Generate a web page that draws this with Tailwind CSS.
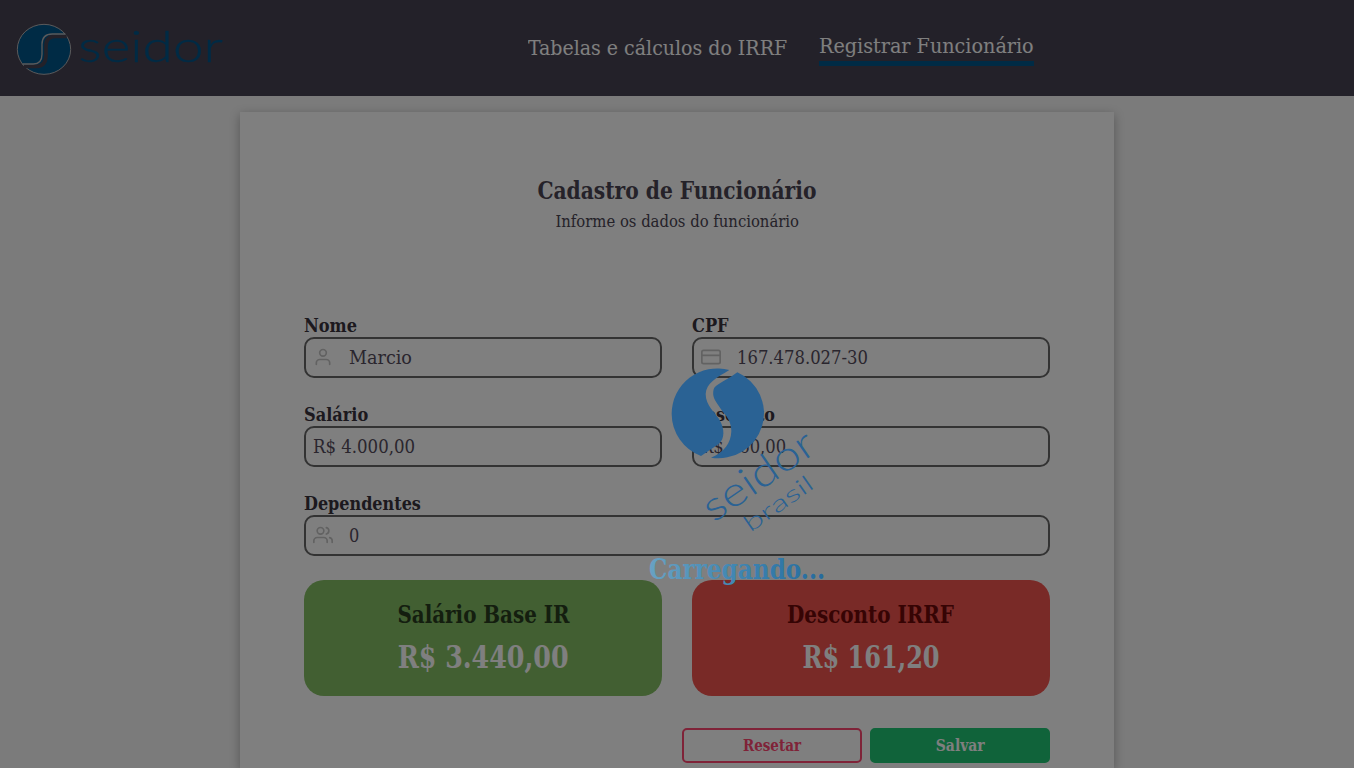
<!DOCTYPE html>
<html lang="pt-BR">
<head>
<meta charset="utf-8">
<title>Registrar Funcionário</title>
<script src="https://cdn.jsdelivr.net/npm/@tailwindcss/browser@4"></script>
</head>
<body class="relative h-[768px] overflow-hidden bg-[#f6f6f6] font-['Roboto_Slab','DejaVu_Serif_Condensed','DejaVu_Serif',serif] font-stretch-condensed text-[#4a4453]">
<header class="flex h-24 items-center bg-[#474353] pl-4">
  <svg class="mt-0.5 h-[56px] w-[224px] shrink-0 overflow-visible" viewBox="48 63 672 168">
    <ellipse cx="132" cy="148" rx="80" ry="75" fill="#00568a" stroke="#b6b4b6" stroke-width="3"/>
    <path d="M200 109H166Q138 109 138 137V165Q138 199 110 199H72" fill="none" stroke="#474353" stroke-width="11"/>
    <path d="M196 102H157Q126 102 126 133V163Q126 192 100 192H67" fill="none" stroke="#b6b4b6" stroke-width="4"/>
    <text x="235" y="185" font-family="Lato" font-weight="300" font-size="132" textLength="434" lengthAdjust="spacingAndGlyphs" fill="#00568a" stroke="#00568a" stroke-width="1">seidor</text>
  </svg>
  <nav class="ml-[288px] flex items-center gap-8 text-[20px] leading-[27px] whitespace-nowrap text-white">
    <a class="w-[260px]"><span class="inline-block origin-left scale-x-[1.055]">Tabelas e cálculos do IRRF</span></a>
    <a class="mt-0.5 -ml-px w-[215px] border-b-5 border-[#00568a] pb-[2px]"><span class="inline-block origin-left translate-y-px scale-x-[1.066]">Registrar Funcionário</span></a>
  </nav>
</header>
<main class="mx-auto mt-4 h-[656px] w-[874px] bg-white px-16 pt-16 shadow-[0_3px_10px_rgba(0,0,0,0.3)]">
  <div class="text-center">
    <h1 class="text-[24px] leading-[30px] font-bold"><span class="inline-block scale-x-[0.937]">Cadastro de Funcionário</span></h1>
    <p class="text-base leading-[30px]"><span class="inline-block translate-y-px scale-x-[1.03]">Informe os dados do funcionário</span></p>
  </div>
  <form class="mt-[78px] grid grid-cols-2 gap-x-[30px] gap-y-[25px] text-lg leading-[24px] text-[#544c5c]">
    <label class="block"><span class="block h-[23px] font-bold text-[#38323c]">Nome</span>
      <span class="flex h-[41px] items-center rounded-[10px] border-2 border-[#666] pl-[7px]"><svg class="-mt-0.5 h-5 w-5 text-[#c4c4c4]" viewBox="0 0 24 24" fill="none" stroke="currentColor" stroke-width="2" stroke-linecap="round" stroke-linejoin="round"><path d="M20 21v-2a4 4 0 0 0-4-4H8a4 4 0 0 0-4 4v2"/><circle cx="12" cy="7" r="4"/></svg><span class="ml-4 inline-block origin-left scale-x-[1.086]">Marcio</span></span></label>
    <label class="block"><span class="block h-[23px] font-bold text-[#38323c]">CPF</span>
      <span class="flex h-[41px] items-center rounded-[10px] border-2 border-[#666] pl-[7px]"><svg class="-mt-0.5 h-5 w-5 text-[#c4c4c4]" viewBox="0 0 24 24" fill="none" stroke="currentColor" stroke-width="2" stroke-linecap="round" stroke-linejoin="round"><rect x="1" y="4" width="22" height="16" rx="2"/><path d="M1 10h22"/></svg><span class="ml-4 inline-block origin-left scale-x-[1.015]">167.478.027-30</span></span></label>
    <label class="block"><span class="block h-[23px] font-bold text-[#38323c]">Salário</span>
      <span class="flex h-[41px] items-center rounded-[10px] border-2 border-[#666] pl-[7px]"><span class="inline-block origin-left scale-x-[1.023]">R$ 4.000,00</span></span></label>
    <label class="block"><span class="block h-[23px] font-bold text-[#38323c]"><span class="inline-block origin-left scale-x-[0.985]">Desconto</span></span>
      <span class="flex h-[41px] items-center rounded-[10px] border-2 border-[#666] pl-[7px]"><span class="inline-block origin-left scale-x-[1.01]">R$ 560,00</span></span></label>
    <label class="col-span-2 block"><span class="block h-[23px] font-bold text-[#38323c]"><span class="inline-block origin-left scale-x-[0.99]">Dependentes</span></span>
      <span class="flex h-[41px] items-center rounded-[10px] border-2 border-[#666] pl-[7px]"><svg class="-mt-0.5 h-5 w-5 text-[#c4c4c4]" viewBox="0 0 24 24" fill="none" stroke="currentColor" stroke-width="2" stroke-linecap="round" stroke-linejoin="round"><path d="M17 21v-2a4 4 0 0 0-4-4H5a4 4 0 0 0-4 4v2"/><circle cx="9" cy="7" r="4"/><path d="M23 21v-2a4 4 0 0 0-3-3.87M16 3.13a4 4 0 0 1 0 7.75"/></svg><span class="ml-4">0</span></span></label>
  </form>
  <section class="mt-6 grid grid-cols-2 gap-[30px] text-center font-bold">
    <div class="h-[116px] rounded-[20px] bg-[#84be64] pt-[17px]">
      <h2 class="text-[24px] leading-[36px] text-[#283c1e]"><span class="inline-block scale-x-[0.92]">Salário Base IR</span></h2>
      <p class="text-[32px] leading-[48px] text-white"><span class="inline-block scale-x-[0.88]">R$ 3.440,00</span></p>
    </div>
    <div class="h-[116px] rounded-[20px] bg-[#f2544e] pt-[17px]">
      <h2 class="text-[24px] leading-[36px] text-[#6c0808]"><span class="inline-block scale-x-[0.922]">Desconto IRRF</span></h2>
      <p class="text-[32px] leading-[48px] text-white"><span class="inline-block scale-x-[0.835]">R$ 161,20</span></p>
    </div>
  </section>
  <div class="mt-8 flex justify-end gap-2 text-base leading-[31px] font-bold">
    <button class="h-[35px] w-[180px] rounded-[5px] border-2 border-[#ff4670] text-[#ff4670]"><span class="inline-block scale-x-[0.937]">Resetar</span></button>
    <button class="h-[35px] w-[180px] rounded-[5px] border-2 border-[#20c674] bg-[#20c674] text-white"><span class="inline-block scale-x-[0.97]">Salvar</span></button>
  </div>
</main>
<div class="absolute inset-0 bg-black/50">
  <svg class="absolute top-[350px] left-[640px] h-[250px] w-[200px]" viewBox="0 0 600 750">
    <defs><linearGradient id="g" x1="0" x2="1"><stop offset="0" stop-color="#68a2c3"/><stop offset="0.5" stop-color="#4086b2"/><stop offset="1" stop-color="#246a9d"/></linearGradient></defs>
    <g fill="#2a6294">
      <path d="M268 60A137 136 0 0 0 95 192A137 136 0 0 0 183 318L235 283C256 266 253 235 240 212C226 188 197 167 197 132C199 100 228 84 268 60Z"/>
      <path d="M292 67A137 135 0 0 1 213 323C253 308 273 278 274 244C275 208 250 190 238 170C224 150 216 140 221 118C225 104 250 97 292 67Z"/>
      <text transform="translate(221 519) rotate(-34.5)" font-family="Lato" font-weight="300" font-size="123" textLength="382" lengthAdjust="spacingAndGlyphs">seidor</text>
      <text transform="translate(331 548) rotate(-35)" font-family="Lato" font-weight="300" font-size="68" textLength="238" lengthAdjust="spacingAndGlyphs">brasil</text>
    </g>
    <text x="27" y="687" font-family="'Roboto Slab','DejaVu Serif Condensed','DejaVu Serif',serif" font-weight="700" font-size="84" textLength="528" lengthAdjust="spacingAndGlyphs" fill="url(#g)">Carregando...</text>
  </svg>
</div>
</body>
</html>
